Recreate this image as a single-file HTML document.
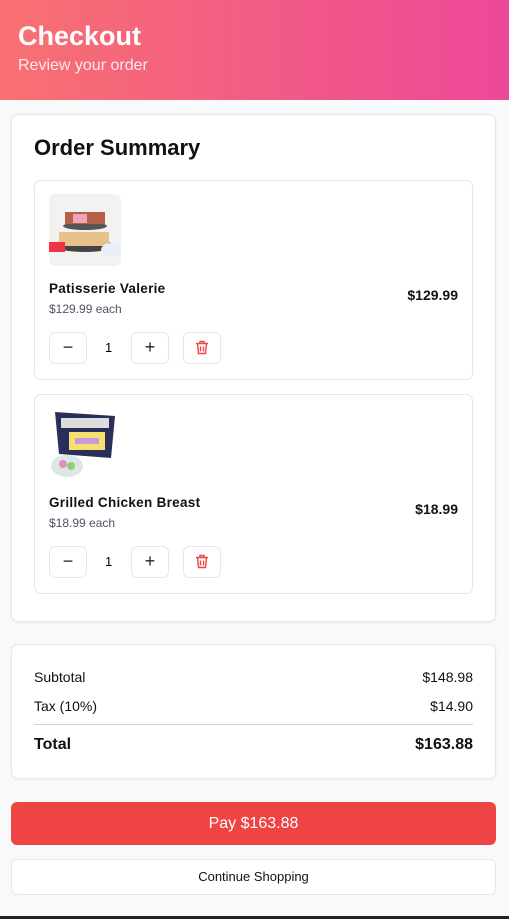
<!DOCTYPE html><html><head><style>
*{box-sizing:border-box;margin:0;padding:0}
body{width:509px;height:919px;background:#f8f9fb;font-family:"Liberation Sans",sans-serif;position:relative;overflow:hidden}
.hdr{position:absolute;left:0;top:0;width:509px;height:100px;background:linear-gradient(90deg,#f87171,#ec4899);color:#fff}
.hdr h1{position:absolute;left:18px;top:21px;font-size:27px;font-weight:bold}
.hdr p{position:absolute;left:18px;top:57px;font-size:16px;color:#fde8ee}
.card{position:absolute;left:11px;width:485px;background:#fff;border:1px solid #e5e7eb;border-radius:7px;box-shadow:0 1px 2px rgba(0,0,0,.06)}
.item{position:absolute;left:22px;width:439px;height:200px;border:1px solid #e5e7eb;border-radius:7px}
.img{position:absolute;left:14px;top:13px;width:72px;height:72px;border-radius:6px;overflow:hidden}
.name{position:absolute;left:14px;top:100px;font-size:13.5px;font-weight:bold;color:#111;letter-spacing:.3px}
.each{position:absolute;left:14px;top:121px;font-size:12px;color:#4b5563}
.pr{position:absolute;right:14px;top:106px;font-size:14px;font-weight:bold;color:#111}
.b{position:absolute;top:151px;width:38px;height:32px;border:1px solid #e5e7eb;border-radius:6px;font-size:18px;text-align:center;line-height:29px;color:#222}
.q{position:absolute;left:70px;top:159px;font-size:13px}
.row{position:absolute;left:22px;right:22px;font-size:14px;color:#111;display:flex;justify-content:space-between}
</style></head><body>
<div class="hdr"><h1>Checkout</h1><p>Review your order</p></div>
<div class="card" style="top:114px;height:508px">
<div style="position:absolute;left:22px;top:20px;font-size:22px;font-weight:bold;color:#111">Order Summary</div>
<div class="item" style="top:65px">
<div class="img"><svg width="72" height="72"><rect width="72" height="72" fill="#f4f2f0"/><ellipse cx="36" cy="32" rx="22" ry="4" fill="#555"/><rect x="16" y="18" width="40" height="12" fill="#b5614a"/><rect x="24" y="20" width="14" height="9" fill="#f0a6b8"/><ellipse cx="36" cy="52" rx="30" ry="6" fill="#444"/><rect x="10" y="38" width="50" height="14" fill="#e8c08a"/><rect x="0" y="48" width="16" height="10" fill="#e34" /><ellipse cx="62" cy="56" rx="10" ry="7" fill="#e8eef8"/></svg></div>
<div class="name">Patisserie Valerie</div><div class="each">$129.99 each</div><div class="pr">$129.99</div>
<div class="b" style="left:14px">−</div><div class="q">1</div><div class="b" style="left:96px">+</div>
<div class="b" style="left:148px"><svg width="14" height="15" viewBox="0 0 14 15" style="margin-top:7px" fill="none" stroke="#ef4444" stroke-width="1.4"><path d="M1 3.5h12M5 3.5V1.5h4v2M2.5 3.5l1 10h7l1-10M5.5 6.5v5M8.5 6.5v5"/></svg></div>
</div>
<div class="item" style="top:279px">
<div class="img"><svg width="72" height="72"><rect width="72" height="72" fill="#fff"/><polygon points="6,4 66,8 62,50 10,46" fill="#2a2f5a"/><rect x="12" y="10" width="48" height="10" fill="#ddd"/><rect x="20" y="24" width="36" height="18" fill="#f5e070"/><rect x="26" y="30" width="24" height="6" fill="#c89bd8"/><ellipse cx="18" cy="58" rx="16" ry="11" fill="#dfe6e6"/><circle cx="14" cy="56" r="4" fill="#e88cc0"/><circle cx="22" cy="58" r="4" fill="#8fd07a"/></svg></div>
<div class="name">Grilled Chicken Breast</div><div class="each">$18.99 each</div><div class="pr">$18.99</div>
<div class="b" style="left:14px">−</div><div class="q">1</div><div class="b" style="left:96px">+</div>
<div class="b" style="left:148px"><svg width="14" height="15" viewBox="0 0 14 15" style="margin-top:7px" fill="none" stroke="#ef4444" stroke-width="1.4"><path d="M1 3.5h12M5 3.5V1.5h4v2M2.5 3.5l1 10h7l1-10M5.5 6.5v5M8.5 6.5v5"/></svg></div>
</div>
</div>
<div class="card" style="top:644px;height:135px">
<div class="row" style="top:24px"><span>Subtotal</span><span>$148.98</span></div>
<div class="row" style="top:53px"><span>Tax (10%)</span><span>$14.90</span></div>
<div style="position:absolute;left:22px;right:22px;top:79px;border-top:1px solid #d1d5db"></div>
<div class="row" style="top:91px;font-size:16px;font-weight:bold"><span>Total</span><span>$163.88</span></div>
</div>
<div style="position:absolute;left:11px;top:802px;width:485px;height:43px;background:#ef4444;border-radius:6px;color:#fff;font-size:16px;text-align:center;line-height:43px">Pay $163.88</div>
<div style="position:absolute;left:11px;top:859px;width:485px;height:36px;background:#fff;border:1px solid #e5e7eb;border-radius:6px;color:#111;font-size:13px;text-align:center;line-height:34px">Continue Shopping</div>
<div style="position:absolute;left:0;top:916px;width:509px;height:3px;background:#222"></div>
</body></html>
